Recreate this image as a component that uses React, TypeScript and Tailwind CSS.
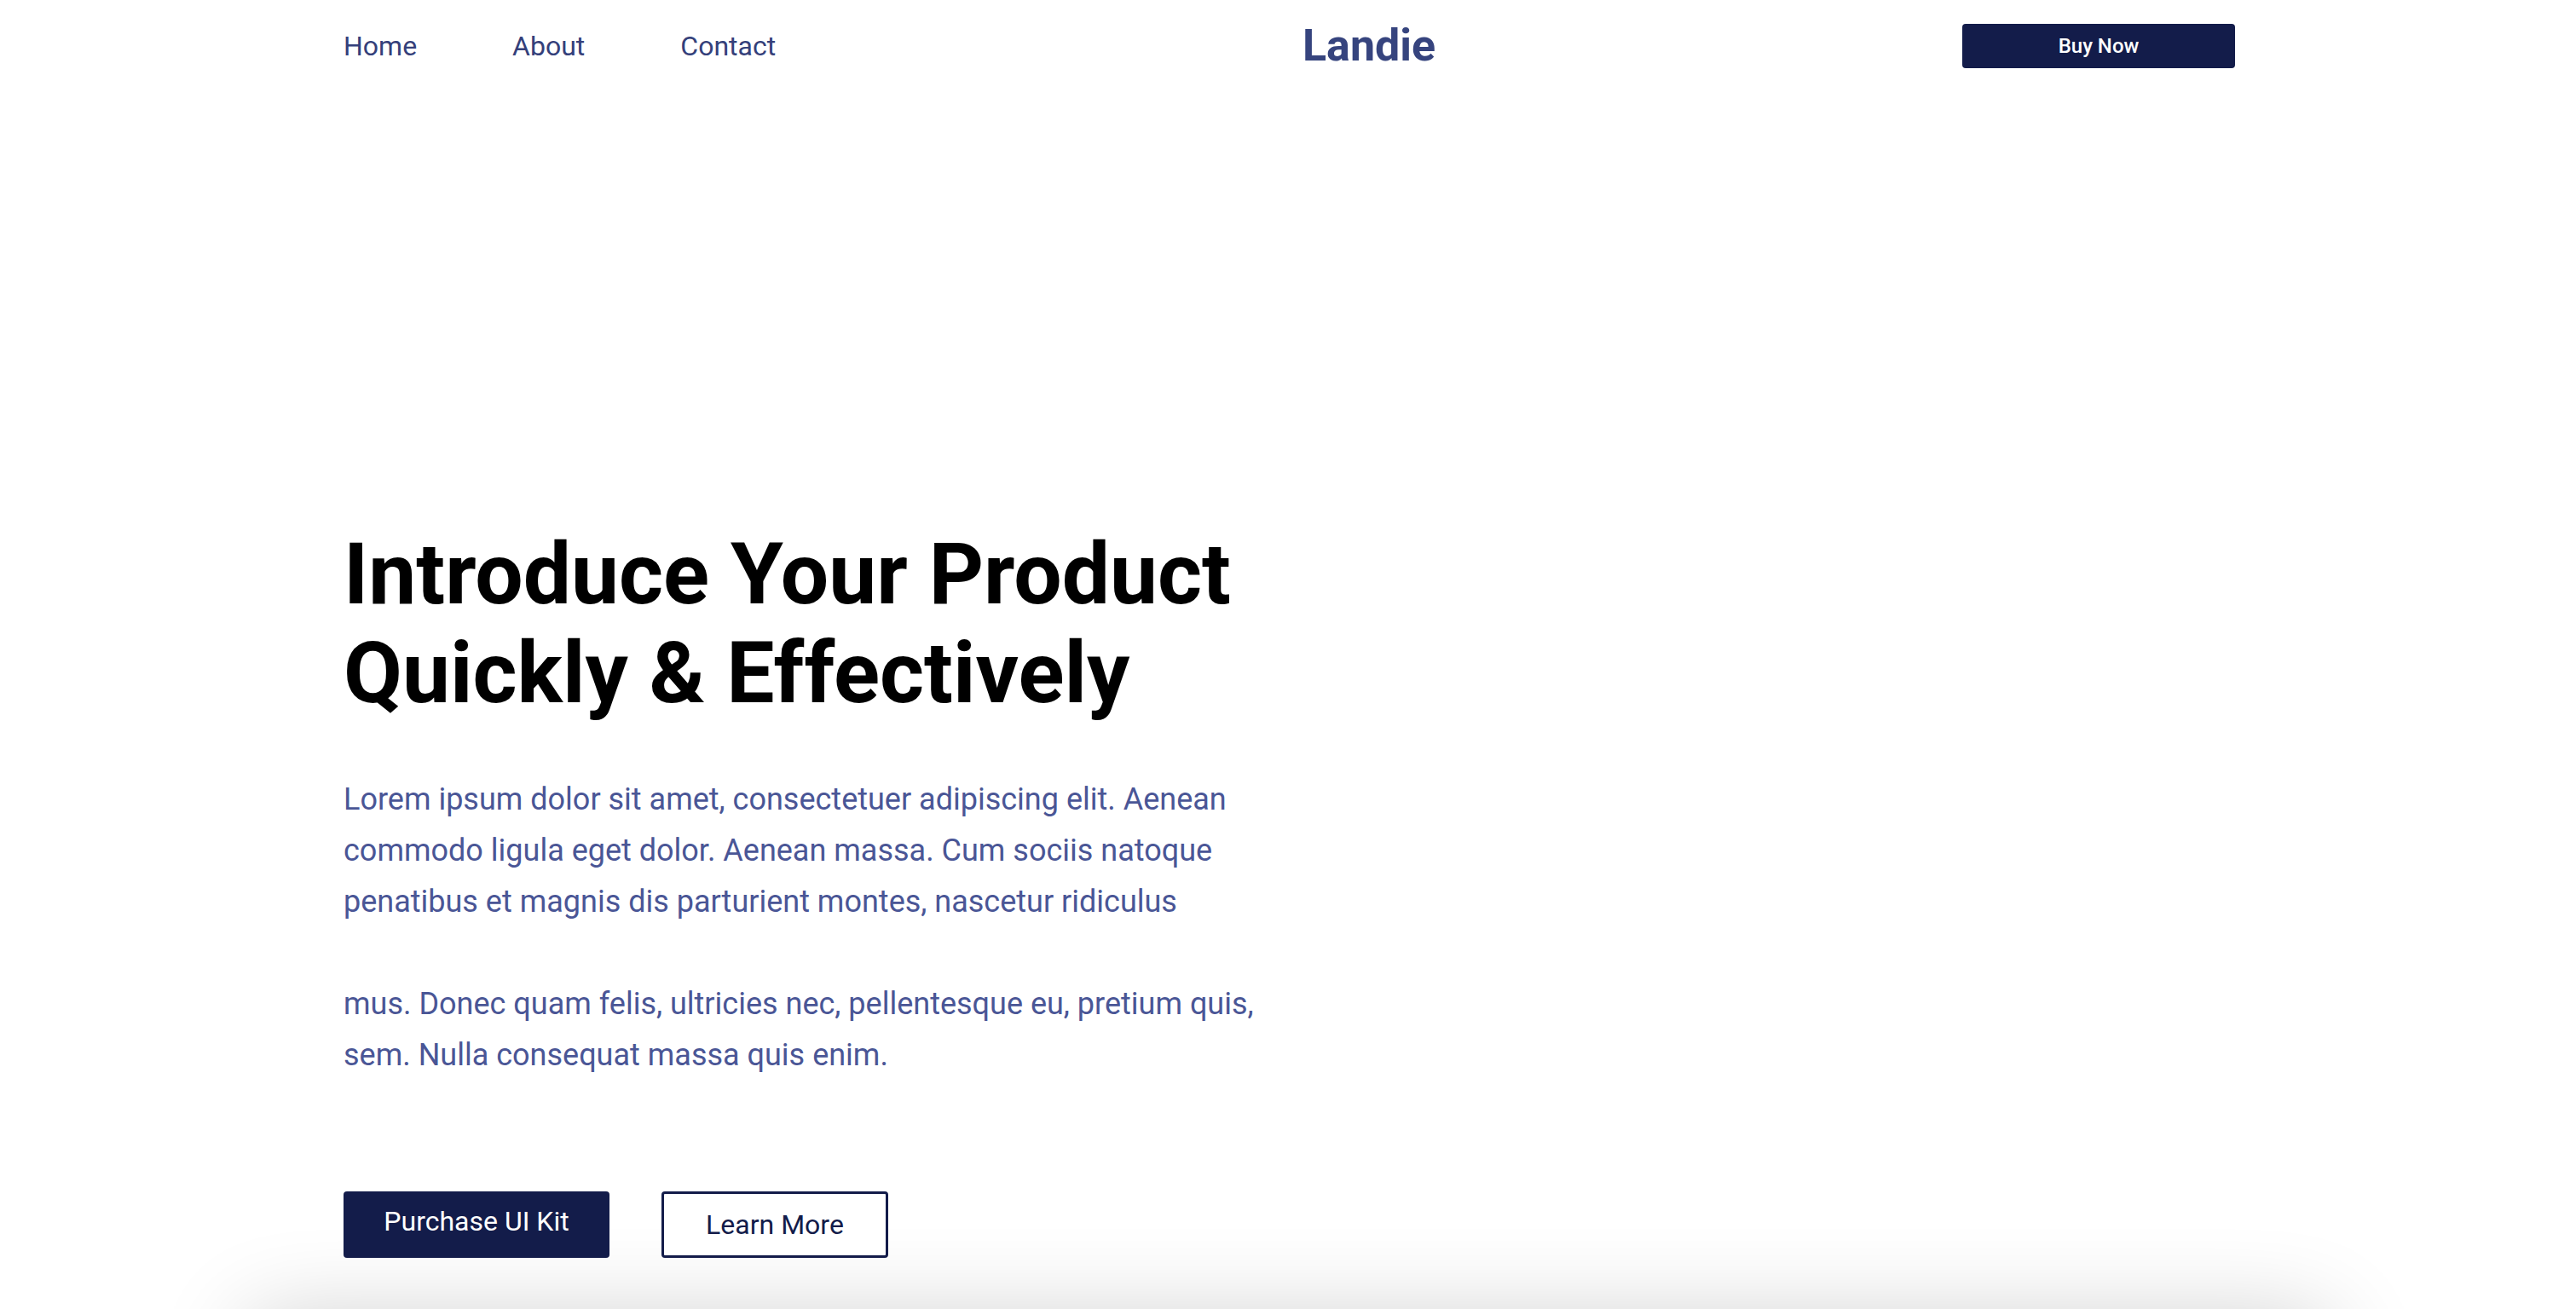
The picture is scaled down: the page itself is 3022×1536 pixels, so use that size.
import React from 'react';

const navLinks = ['Home', 'About', 'Contact'];

const App: React.FC = () => {
  return (
    <div className="min-h-screen overflow-hidden bg-white pl-[403px] pr-[400px] font-['Roboto',sans-serif]">
      <header className="flex h-[108px] items-center justify-between">
        <nav className="flex gap-[112px] text-[32px] text-[#34407a]">
          {navLinks.map((link) => (
            <a key={link} href="#" className="leading-none">
              {link}
            </a>
          ))}
        </nav>
        <div className="text-[52px] font-bold leading-none text-[#36447e]">Landie</div>
        <button className="h-[52px] w-[320px] rounded-[4px] bg-[#131c4a] text-[24px] font-medium text-white">
          Buy Now
        </button>
      </header>

      <section className="pt-[508px]">
        <h1 className="text-[100px] font-bold leading-[116px] text-black">
          Introduce Your Product
          <br />
          Quickly &amp; Effectively
        </h1>
        <p className="mt-[60px] w-[1100px] text-[36px] leading-[60px] text-[#4a5696]">
          Lorem ipsum dolor sit amet, consectetuer adipiscing elit. Aenean commodo ligula eget dolor. Aenean massa.
          Cum sociis natoque penatibus et magnis dis parturient montes, nascetur ridiculus
          <br />
          <br />
          mus. Donec quam felis, ultricies nec, pellentesque eu, pretium quis, sem. Nulla consequat massa quis enim.
        </p>
        <div className="mt-[130px] flex gap-[61px]">
          <button className="h-[78px] w-[312px] rounded-[4px] bg-[#131c4a] pb-[9px] text-[32px] text-white">
            Purchase UI Kit
          </button>
          <button className="h-[78px] w-[266px] rounded-[4px] border-[3px] border-[#131c4a] bg-white text-[32px] text-[#131c4a]">
            Learn More
          </button>
        </div>
      </section>

      <div className="-ml-[111px] -mr-[110px] mt-[72px] h-[600px] rounded-[16px] bg-white shadow-[0_0_110px_rgba(0,0,0,0.2)]" />
    </div>
  );
};

export default App;
